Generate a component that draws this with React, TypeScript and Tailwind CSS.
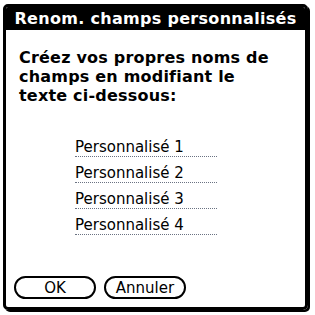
export default function App() {
  const fields = ['Personnalisé 1', 'Personnalisé 2', 'Personnalisé 3', 'Personnalisé 4']

  return (
    <div className="w-[315px] h-[315px] bg-white pl-[3px] pt-[4px] font-['DejaVu_Sans',sans-serif] text-black">
      <div className="w-[305px] h-[306px] border-[3px] border-black rounded-[5px] shadow-[2px_2px_0_#000] flex flex-col overflow-hidden">
        <div className="h-[23px] bg-black text-white font-bold text-[16px] leading-[23px] text-center tracking-[0.3px]">
          Renom. champs personnalisés
        </div>
        <div className="flex-1 flex flex-col px-[13px] pt-[18px]">
          <p className="font-bold text-[16px] leading-[19px] tracking-[0.2px]">
            Créez vos propres noms de
            <br />
            champs en modifiant le
            <br />
            texte ci-dessous:
          </p>
          <div className="flex flex-col gap-[8px] mt-[34px] pl-[56px]">
            {fields.map((f) => (
              <div
                key={f}
                className="w-[142px] h-[18px] text-[15px] leading-[16px] border-b border-dotted border-gray-500"
              >
                {f}
              </div>
            ))}
          </div>
          <div className="mt-auto mb-[8px] -ml-[5px] flex gap-[8px]">
            <button className="w-[82px] h-[23px] border-2 border-black rounded-full text-[15px] leading-[18px]">
              OK
            </button>
            <button className="w-[82px] h-[23px] border-2 border-black rounded-full text-[15px] leading-[18px]">
              Annuler
            </button>
          </div>
        </div>
      </div>
    </div>
  )
}
